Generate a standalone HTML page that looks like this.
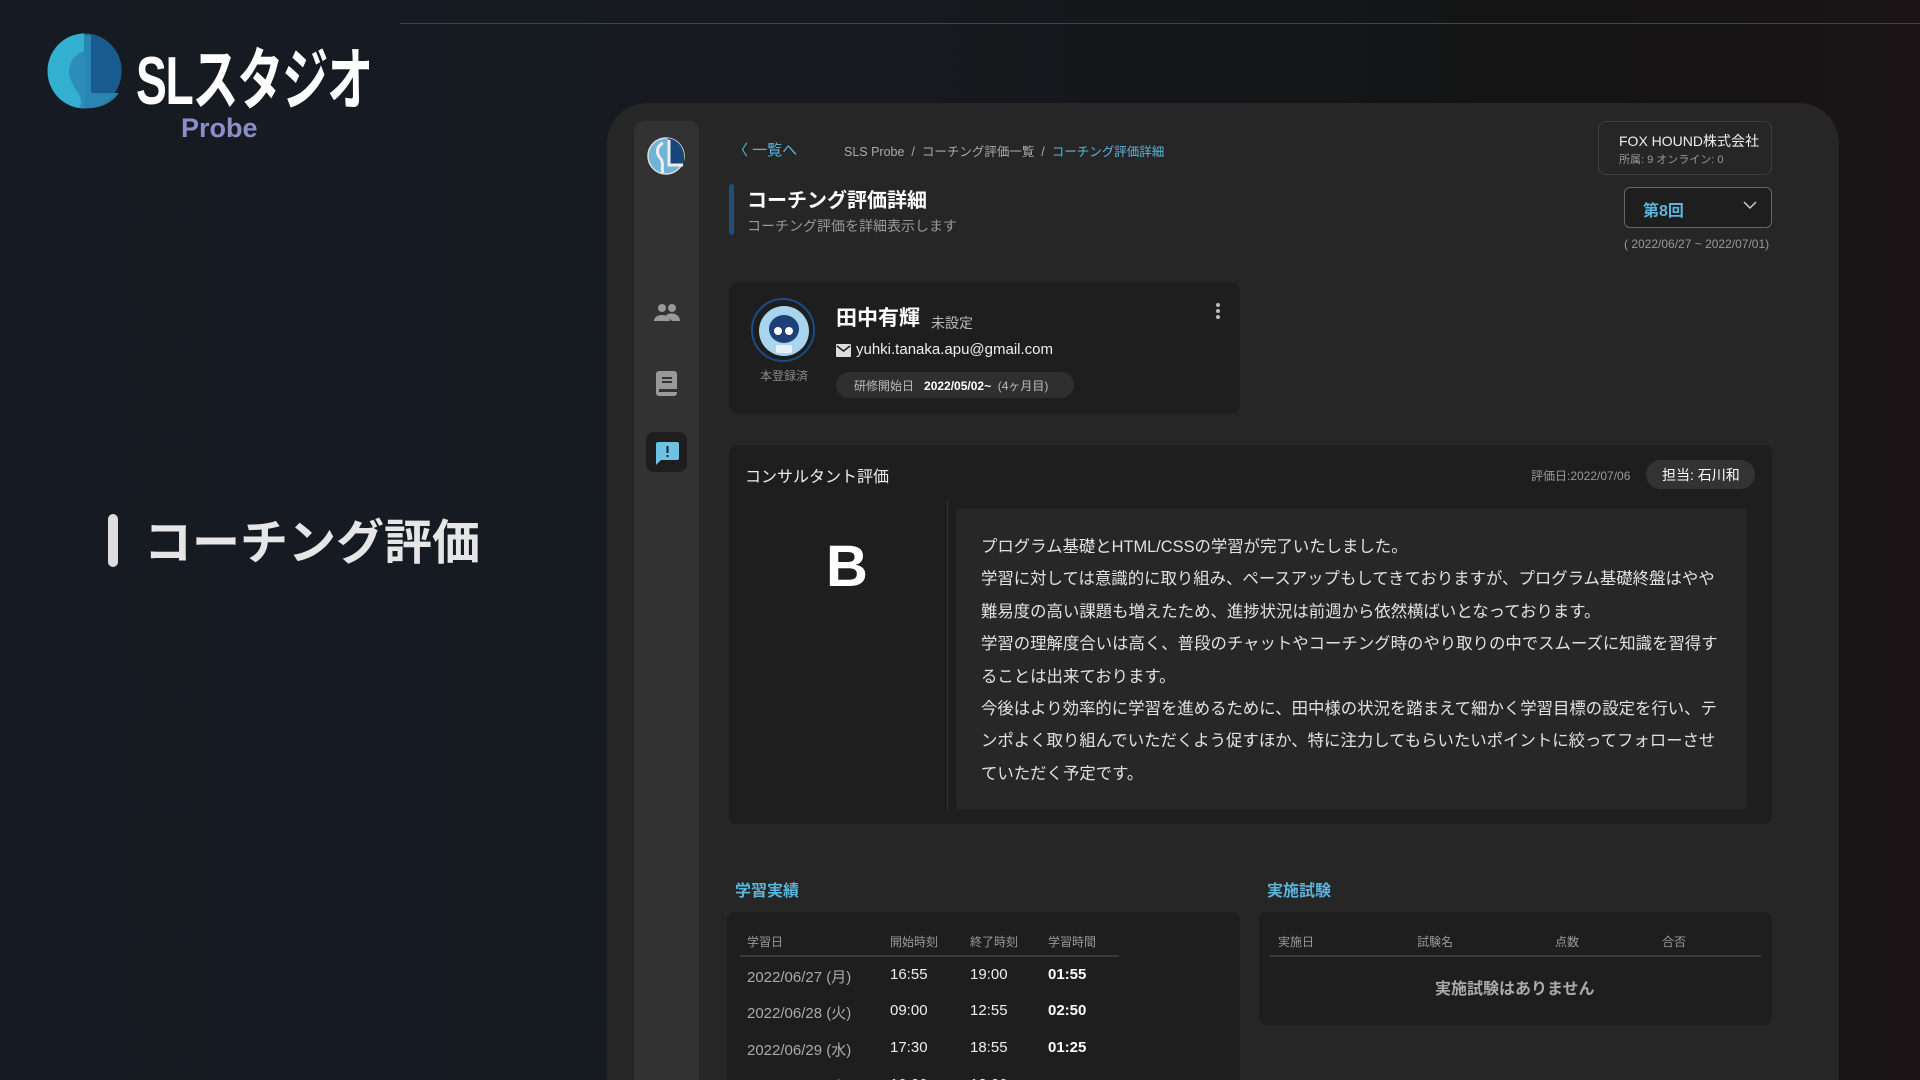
<!DOCTYPE html>
<html><head><meta charset="utf-8"><style>
*{margin:0;padding:0;box-sizing:border-box}
html,body{width:1920px;height:1080px;overflow:hidden}
body{background:linear-gradient(90deg,#161b23 0%,#161a20 40%,#141414 80%,#1a1416 100%);font-family:"Liberation Sans","Noto Sans CJK JP",sans-serif;color:#ddd;position:relative}
.a{position:absolute;white-space:nowrap}
.panel{position:absolute;left:607px;top:103px;width:1232px;height:977px;background:#262626;border-radius:40px 40px 0 0}
.side{position:absolute;left:634px;top:121px;width:65px;height:959px;background:#323232;border-radius:10px 10px 0 0}
.card{position:absolute;background:#1e1e1e;border-radius:8px}
.tl{font-size:16.4px;color:#e2e2e2;line-height:32.4px}
.th{font-size:12px;color:#999}
.td{font-size:15px;color:#aaa}
.tb{font-size:15px;color:#eee}
</style></head><body>
<div class="a" style="left:400px;top:23px;width:1520px;height:1px;background:#3a4350"></div>
<svg class="a" style="left:47px;top:33px" width="75" height="76" viewBox="0 0 75 76">
<ellipse cx="37.5" cy="38" rx="37" ry="37.5" fill="#33b0d0"/>
<path d="M37.5 0.5 A37 37.5 0 0 1 37.5 75.5 Z" fill="#1a5b8f"/>
<path d="M44 2 L44 60 L72 60 A37 37.5 0 0 1 45 75 L32 75 C40 62 22 55 22 38 C22 28 30 20 37 18 L37 2 Z" fill="#2b8ab5" opacity=".9"/>
</svg>
<div class="a" style="left:136px;top:25px;font-size:68px;font-weight:bold;color:#fff;letter-spacing:-2px;transform:scaleX(.68);transform-origin:left">SLスタジオ</div>
<div class="a" style="left:181px;top:113px;font-size:27px;font-weight:bold;color:#8a8fc9">Probe</div>
<div class="a" style="left:108px;top:514px;width:10px;height:53px;background:#ddd;border-radius:5px"></div>
<div class="a" style="left:144px;top:503px;font-size:48px;font-weight:bold;color:#e6e6e6">コーチング評価</div>

<div class="panel"></div>
<div class="side"></div>
<svg class="a" style="left:647px;top:137px" width="38" height="38" viewBox="0 0 38 38"><circle cx="19" cy="19" r="18" fill="#6fb4d6" stroke="#ddd" stroke-width="1.5"/><path d="M19 1 A18 18 0 0 1 37 19 L37 28 L22 28 L22 2Z" fill="#17477a"/><path d="M22 3 V28 H36" stroke="#eee" stroke-width="3" fill="none"/><path d="M16 6 C8 10 10 18 14 22 C17 26 14 32 16 36" stroke="#eee" stroke-width="3" fill="none"/></svg>
<svg class="a" style="left:654px;top:303px" width="26" height="20" viewBox="0 0 26 20"><circle cx="8" cy="5" r="4" fill="#999"/><circle cx="18" cy="5" r="4" fill="#999"/><path d="M0 18 C0 10 16 10 16 18Z M12 12 C16 9 26 10 26 18 L18 18Z" fill="#999"/></svg>
<svg class="a" style="left:656px;top:371px" width="22" height="26" viewBox="0 0 22 26"><rect x="0" y="0" width="21" height="25" rx="3" fill="#999"/><rect x="6" y="6" width="10" height="2" fill="#333"/><rect x="6" y="10" width="10" height="2" fill="#333"/><rect x="3" y="18" width="18" height="3" fill="#333"/></svg>
<div class="a" style="left:646px;top:432px;width:41px;height:40px;background:#1e1e1e;border-radius:8px"></div>
<svg class="a" style="left:654px;top:440px" width="26" height="26" viewBox="0 0 26 26"><path d="M3 2 H23 Q25 2 25 4 V18 Q25 20 23 20 H7 L2 25 V4 Q2 2 4 2Z" fill="#6cc2e4"/><rect x="12.5" y="6" width="2" height="7" fill="#1e1e1e"/><rect x="12.5" y="15" width="2" height="2" fill="#1e1e1e"/></svg>

<div class="a" style="left:733px;top:139px;font-size:15px;color:#5ab4dc">〈 一覧へ</div>
<div class="a" style="left:844px;top:141px;font-size:12.5px;color:#aaa">SLS Probe&nbsp; / &nbsp;コーチング評価一覧&nbsp; / &nbsp;<span style="color:#5ab4dc">コーチング評価詳細</span></div>
<div class="a" style="left:729px;top:184px;width:5px;height:51px;background:#1e4f80;border-radius:3px"></div>
<div class="a" style="left:747px;top:184px;font-size:20px;font-weight:bold;color:#fff">コーチング評価詳細</div>
<div class="a" style="left:747px;top:216px;font-size:14px;color:#999">コーチング評価を詳細表示します</div>

<div class="a" style="left:1598px;top:121px;width:174px;height:54px;border:1px solid #3e3e3e;border-radius:8px"></div>
<div class="a" style="left:1619px;top:131px;font-size:14px;color:#eee">FOX HOUND株式会社</div>
<div class="a" style="left:1619px;top:151px;font-size:11px;color:#999">所属: 9 オンライン: 0</div>
<div class="a" style="left:1624px;top:187px;width:148px;height:41px;border:1px solid #666;border-radius:6px;background:#1e1e1e"></div>
<div class="a" style="left:1643px;top:197px;font-size:16px;font-weight:bold;color:#5ab4dc">第8回</div>
<svg class="a" style="left:1743px;top:201px" width="14" height="9" viewBox="0 0 14 9"><path d="M1 1 L7 7 L13 1" stroke="#ccc" stroke-width="1.5" fill="none"/></svg>
<div class="a" style="left:1624px;top:237px;font-size:12px;color:#999">( 2022/06/27 ~ 2022/07/01)</div>

<div class="card" style="left:729px;top:283px;width:511px;height:130px"></div>
<div class="a" style="left:751px;top:298px;width:64px;height:64px;border-radius:50%;border:2px solid #1a4c86;background:#1e1e1e"></div>
<svg class="a" style="left:758px;top:305px" width="52" height="52" viewBox="0 0 52 52"><circle cx="26" cy="26" r="25" fill="#a8d4ec"/><ellipse cx="26" cy="24" rx="15" ry="14" fill="#1f3f78"/><circle cx="20" cy="26" r="4" fill="#fff"/><circle cx="31" cy="26" r="4" fill="#fff"/><rect x="18" y="40" width="16" height="8" rx="2" fill="#e6f2f8"/></svg>
<div class="a" style="left:760px;top:367px;font-size:12px;color:#888">本登録済</div>
<div class="a" style="left:836px;top:302px;font-size:21px;font-weight:bold;color:#fff">田中有輝</div>
<div class="a" style="left:931px;top:313px;font-size:14px;color:#bbb">未設定</div>
<svg class="a" style="left:836px;top:344px" width="15" height="13" viewBox="0 0 15 13"><rect width="15" height="13" rx="1" fill="#ddd"/><path d="M1 2 L7.5 7 L14 2" stroke="#1e1e1e" stroke-width="1.5" fill="none"/></svg>
<div class="a" style="left:856px;top:341px;font-size:15px;color:#eee">yuhki.tanaka.apu@gmail.com</div>
<div class="a" style="left:836px;top:372px;width:238px;height:26px;border-radius:13px;background:#2f2f2f"></div>
<div class="a" style="left:854px;top:377px;font-size:12px;color:#bbb">研修開始日 &nbsp;&nbsp;<b style="color:#fff">2022/05/02~</b> &nbsp;(4ヶ月目)</div>
<svg class="a" style="left:1215px;top:302px" width="6" height="18" viewBox="0 0 6 18"><circle cx="3" cy="3" r="2" fill="#bbb"/><circle cx="3" cy="9" r="2" fill="#bbb"/><circle cx="3" cy="15" r="2" fill="#bbb"/></svg>

<div class="card" style="left:729px;top:445px;width:1043px;height:379px"></div>
<div class="a" style="left:745px;top:463px;font-size:16px;color:#eee">コンサルタント評価</div>
<div class="a" style="left:1531px;top:467px;font-size:12px;color:#999">評価日:2022/07/06</div>
<div class="a" style="left:1646px;top:460px;width:109px;height:29px;border-radius:15px;background:#333"></div>
<div class="a" style="left:1662px;top:465px;font-size:14px;color:#fff">担当: 石川和</div>
<div class="a" style="left:947px;top:500px;width:1px;height:310px;background:#333"></div>
<div class="a" style="left:826px;top:533px;font-size:58px;font-weight:bold;color:#fff">B</div>
<div class="a" style="left:956px;top:509px;width:791px;height:300px;background:#272727;border-radius:4px"></div>
<div class="a tl" style="left:981px;top:531px">プログラム基礎とHTML/CSSの学習が完了いたしました。<br>学習に対しては意識的に取り組み、ペースアップもしてきておりますが、プログラム基礎終盤はやや<br>難易度の高い課題も増えたため、進捗状況は前週から依然横ばいとなっております。<br>学習の理解度合いは高く、普段のチャットやコーチング時のやり取りの中でスムーズに知識を習得す<br>ることは出来ております。<br>今後はより効率的に学習を進めるために、田中様の状況を踏まえて細かく学習目標の設定を行い、テ<br>ンポよく取り組んでいただくよう促すほか、特に注力してもらいたいポイントに絞ってフォローさせ<br>ていただく予定です。</div>

<div class="a" style="left:735px;top:877px;font-size:16px;font-weight:bold;color:#5ab4dc">学習実績</div>
<div class="a" style="left:1267px;top:877px;font-size:16px;font-weight:bold;color:#5ab4dc">実施試験</div>
<div class="card" style="left:727px;top:912px;width:513px;height:200px"></div>
<div class="a" style="left:740px;top:955px;width:379px;height:2px;background:#3a3a3a"></div>
<div class="a th" style="left:747px;top:933px">学習日</div>
<div class="a th" style="left:890px;top:933px">開始時刻</div>
<div class="a th" style="left:970px;top:933px">終了時刻</div>
<div class="a th" style="left:1048px;top:933px">学習時間</div>
<div class="a td" style="left:747px;top:966px">2022/06/27 (月)</div><div class="a tb" style="left:890px;top:966px">16:55</div><div class="a tb" style="left:970px;top:966px">19:00</div><div class="a tb" style="left:1048px;top:966px;font-weight:bold;color:#fff">01:55</div>
<div class="a td" style="left:747px;top:1002px">2022/06/28 (火)</div><div class="a tb" style="left:890px;top:1002px">09:00</div><div class="a tb" style="left:970px;top:1002px">12:55</div><div class="a tb" style="left:1048px;top:1002px;font-weight:bold;color:#fff">02:50</div>
<div class="a td" style="left:747px;top:1039px">2022/06/29 (水)</div><div class="a tb" style="left:890px;top:1039px">17:30</div><div class="a tb" style="left:970px;top:1039px">18:55</div><div class="a tb" style="left:1048px;top:1039px;font-weight:bold;color:#fff">01:25</div>
<div class="a td" style="left:747px;top:1076px">2022/06/30 (木)</div><div class="a tb" style="left:890px;top:1076px">10:00</div><div class="a tb" style="left:970px;top:1076px">12:00</div>

<div class="card" style="left:1259px;top:912px;width:513px;height:113px"></div>
<div class="a" style="left:1270px;top:955px;width:491px;height:2px;background:#3a3a3a"></div>
<div class="a th" style="left:1278px;top:933px">実施日</div>
<div class="a th" style="left:1417px;top:933px">試験名</div>
<div class="a th" style="left:1555px;top:933px">点数</div>
<div class="a th" style="left:1662px;top:933px">合否</div>
<div class="a" style="left:1435px;top:975px;font-size:16px;font-weight:bold;color:#aaa">実施試験はありません</div>
</body></html>
